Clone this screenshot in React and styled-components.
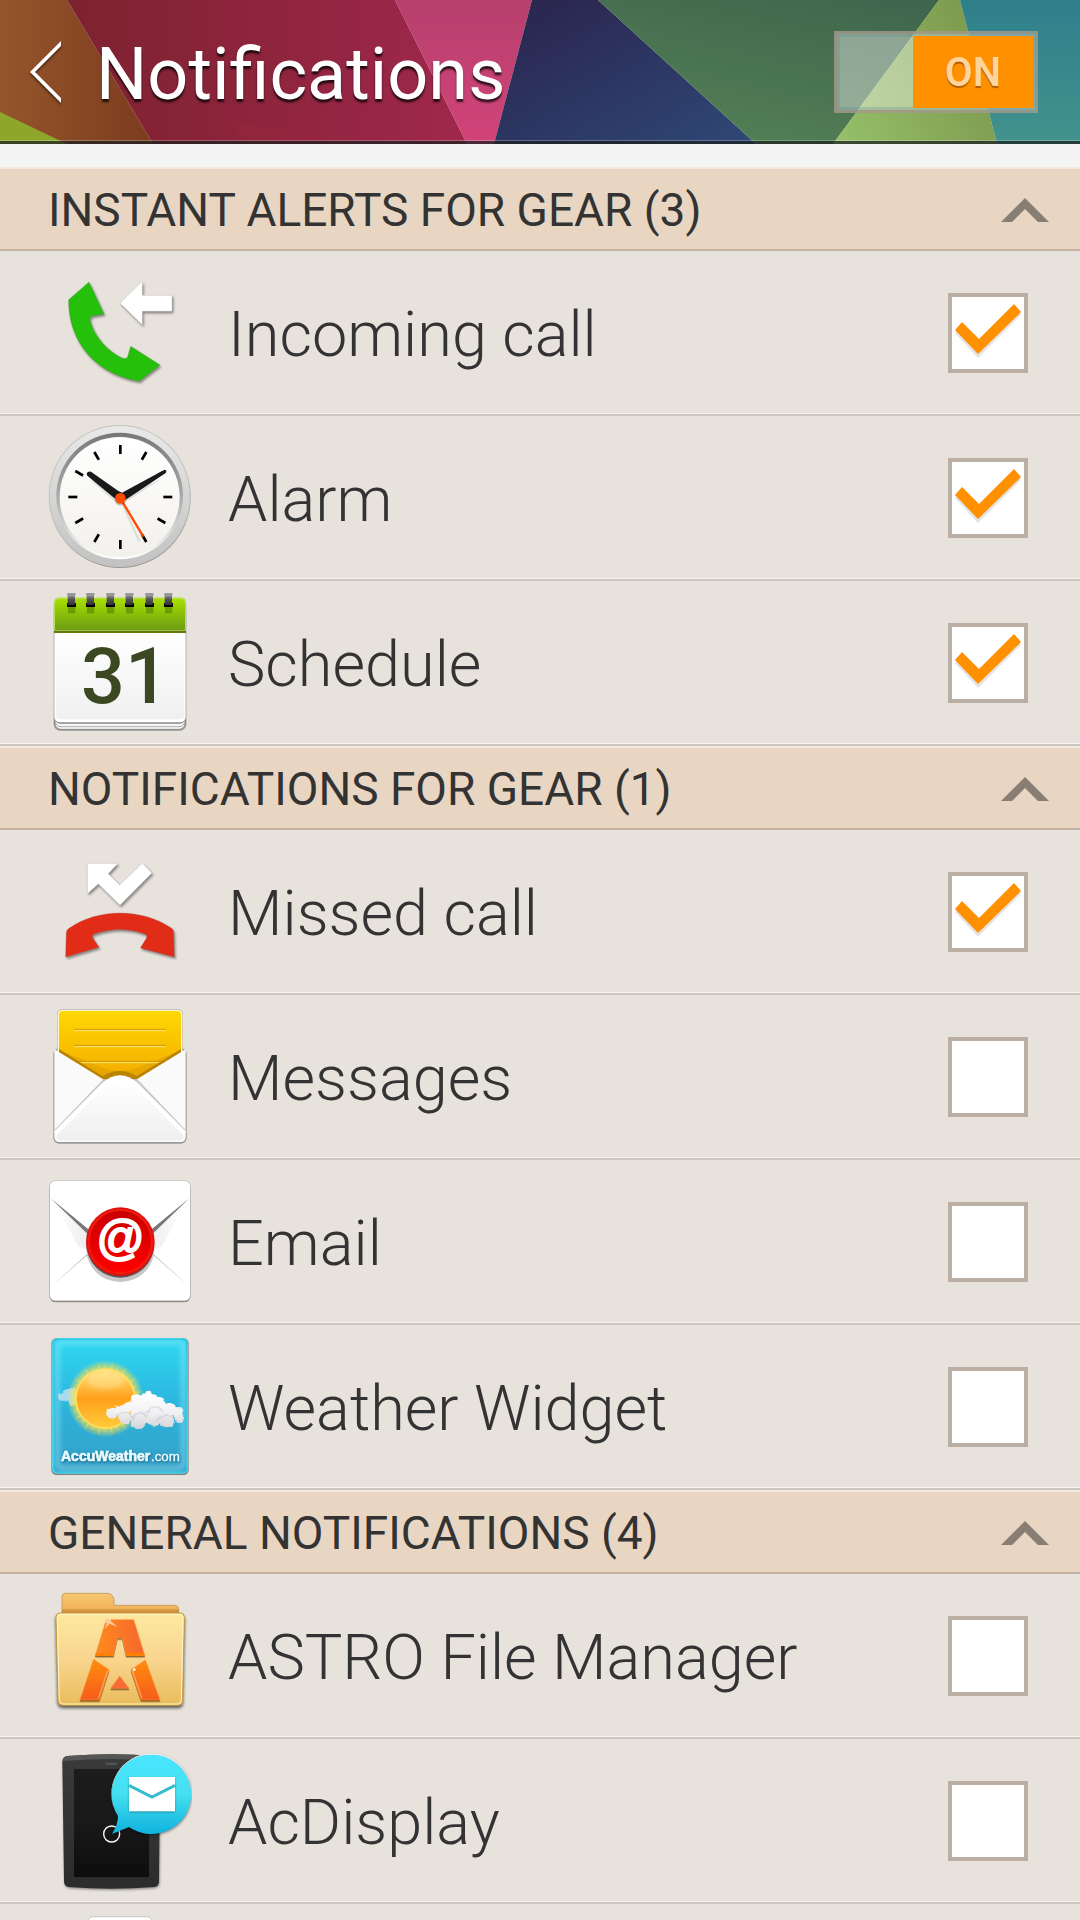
import React, { useState } from 'react'
import styled, { createGlobalStyle } from 'styled-components'

const GlobalStyle = createGlobalStyle`
  * {
    box-sizing: border-box;
  }
  body {
    margin: 0;
    background: #e7e2dc;
    color: #333;
    font-family: Roboto, 'Liberation Sans', sans-serif;
  }
`

const Shade = ({ id, from, mid, to }) => (
  <linearGradient id={id} x1='0' y1='0' x2='0' y2='1'>
    <stop offset='0' stopColor={from} />
    {mid && <stop offset='.5' stopColor={mid} />}
    <stop offset='1' stopColor={to} />
  </linearGradient>
)

const IncomingIcon = () => (
  <Icon viewBox='144 30 432 432' aria-hidden='true'>
    <g filter='drop-shadow(4px 6px 3px rgba(0,0,0,.4))' strokeWidth='1'>
      <path
        fill='#25c009'
        stroke='#5a8a50'
        d='M267 96L206 149C204 250 262 366 417 394L480 345L392 289L383 320Q380 328 369 325C325 306 282 260 270 211Q268 199 280 197L312 192Z'
      />
      <path
        fill='#fff'
        stroke='#aaa'
        d='M360 159L427 94V136H516V184H427V225Z'
      />
    </g>
  </Icon>
)

const AlarmIcon = () => (
  <Icon viewBox='144 525 432 432' aria-hidden='true'>
    <defs>
      <Shade id='rim' from='#e9e9e9' to='#c2c2c2' />
      <Shade id='groove' from='#777' mid='#aaa' to='#fff' />
      <Shade id='face' from='#fff' to='#f3f1ec' />
    </defs>
    <circle cx='360' cy='742' r='212' fill='#999' />
    <circle cx='359' cy='738' r='213' fill='#c6c2bd' />
    <circle cx='359' cy='738' r='210' fill='url(#rim)' />
    <circle cx='359' cy='738' r='190' fill='url(#groove)' />
    <circle cx='359' cy='741' r='180' fill='url(#face)' />
    {[...Array(12)].map((_, i) => (
      <path
        key={i}
        d='M361 585V612'
        stroke='#000'
        strokeWidth='8'
        transform={`rotate(${i * 30} 361 741)`}
      />
    ))}
    <g fill='#000' opacity='.1'>
      <path d='M264 684L352 762L374 758L492 682L370 742Z' />
      <path d='M370 768L418 874' stroke='#000' strokeWidth='6' />
    </g>
    <path
      fill='#191919'
      d='M260 672Q261 662 273 665L354 722L366 728L485 664L500 660L497 669L376 750L350 750L262 677Z'
    />
    <path d='M361 745L430 860' stroke='#ff4b00' strokeWidth='7' />
    <circle cx='361' cy='750' r='17' opacity='.2' />
    <circle cx='361' cy='745' r='16' fill='#ff4b00' />
  </Icon>
)

const ScheduleIcon = () => (
  <Icon viewBox='144 60 432 432' aria-hidden='true'>
    <defs>
      <Shade id='leather' from='#a7de00' to='#6a9c14' />
      <Shade id='paper' from='#fff' to='#f0f0f0' />
      <Shade id='ring' from='#bbb' mid='#555' to='#333' />
    </defs>
    <rect x='161' y='84' width='398' height='398' rx='20' fill='#666' opacity='.6' />
    <rect x='165' y='420' width='390' height='58' rx='18' fill='#f5f5f5' stroke='#777' strokeWidth='2' />
    <rect x='165' y='410' width='390' height='60' rx='18' fill='#f5f5f5' stroke='#888' strokeWidth='2' />
    <rect x='163' y='400' width='394' height='61' rx='18' fill='#888' />
    <rect x='163' y='82' width='394' height='375' rx='16' fill='#fff' />
    <path fill='url(#paper)' d='M168 186H553V435Q553 448 540 448H182Q168 448 168 435Z' />
    <path fill='#b9dc58' d='M162 186V98Q162 82 178 82H542Q558 82 558 98V186Z' />
    <path fill='url(#leather)' d='M165 183V101Q165 87 179 87H541Q555 87 555 101V183Z' />
    <path fill='#a1be55' d='M162 180H558V184H162Z' />
    <path fill='#637a0c' d='M162 183H558V189H162Z' />
    {[214, 271, 331, 388, 448, 505].map((x) => (
      <g key={x}>
        <path fill='#2c5000' opacity='.35' d={`M${x - 10} 108h22v22h-22z`} />
        <path d={`M${x - 13} 99h27v12h-27z`} />
        <rect x={x - 11} y='69' width='22' height='36' rx='3' fill='url(#ring)' />
        <rect x={x - 13} y='69' width='26' height='8' rx='4' fill='#999' />
      </g>
    ))}
    <text
      x='243'
      y='400'
      fontFamily='Roboto, sans-serif'
      fontSize='232'
      fontWeight='500'
      fill='#3c4822'
    >
      31
    </text>
  </Icon>
)

const MissedIcon = () => (
  <Icon viewBox='144 57 432 432' aria-hidden='true'>
    <g filter='drop-shadow(4px 6px 3px rgba(0,0,0,.4))'>
      <path
        fill='#fff'
        stroke='#aaa'
        d='M262 130H354L325 161L359 195L427 130L456 159L360 256L295 192L262 221Z'
      />
      <path
        fill='#e12c17'
        stroke='#a06058'
        d='M197 411L199 336Q200 330 207 325C295 264 425 264 515 325Q521 330 521 336L523 411L421 384L440 353Q443 346 434 342Q360 315 283 342Q275 345 278 353L297 382Z'
      />
    </g>
  </Icon>
)

const MessagesIcon = () => (
  <Icon viewBox='144 552 432 432' aria-hidden='true'>
    <defs>
      <linearGradient id='letter' gradientUnits='userSpaceOnUse' x1='0' y1='573' x2='0' y2='775'>
        <stop offset='0' stopColor='#fdd803' />
        <stop offset='1' stopColor='#f5ac00' />
      </linearGradient>
      <Shade id='envelope' from='#fff' to='#efefef' />
    </defs>
    <rect x='160' y='684' width='400' height='287' rx='18' fill='#777' opacity='.7' />
    <rect x='171' y='568' width='378' height='160' rx='14' fill='#bbb6ae' />
    <rect x='173' y='570' width='374' height='180' rx='13' fill='#fff6cc' />
    <path fill='url(#letter)' d='M177 585Q177 573 189 573H531Q543 573 543 585V790H177Z' />
    <path fill='#bb8600' opacity='.25' d='M177 690L310 744Q360 762 410 744L543 690V700L410 790H310Z' />
    <g strokeWidth='3'>
      <path stroke='#d39b00' d='M222 628H498M222 676H498M230 724H490' />
      <path stroke='#ffe477' d='M222 632H498M222 680H498M236 728H484' />
    </g>
    <path fill='#b98300' d='M177 687L308 769Q358 737 410 769L543 687V700L410 790H310L177 700Z' />
    <path fill='#fafafa' d='M163 688L312 779L360 790L408 779L557 688V940H163Z' />
    <path fill='#c8c8c8' d='M163 930L310 778H412L557 930V940H163Z' />
    <path
      fill='#fff'
      d='M163 934L306 790Q360 742 414 790L557 934V950Q557 966 541 966H179Q163 966 163 950Z'
    />
    <path
      fill='url(#envelope)'
      d='M168 948L318 798Q360 762 402 798L552 948Q550 962 536 962H184Q170 962 168 948Z'
    />
  </Icon>
)

const EmailIcon = () => (
  <Icon viewBox='144 57 432 432' aria-hidden='true'>
    <defs>
      <Shade id='seal' from='#c80000' to='#ff0000' />
      <linearGradient id='foldLeft'>
        <stop offset='0' stopColor='#fff' />
        <stop offset='1' stopColor='#eee' />
      </linearGradient>
      <linearGradient id='foldRight'>
        <stop offset='0' stopColor='#eee' />
        <stop offset='1' stopColor='#fff' />
      </linearGradient>
    </defs>
    <rect x='148' y='94' width='424' height='363' rx='19' fill='#777' opacity='.8' />
    <rect x='148' y='91' width='424' height='362' rx='18' fill='#c9c4be' />
    <rect x='150' y='93' width='420' height='358' rx='16' fill='#fff' />
    <path fill='url(#foldLeft)' d='M160 153L265 245V300L235 290Z' />
    <path fill='url(#foldRight)' d='M560 153L455 245V300L485 290Z' />
    <path fill='#777' d='M152 145L265 238V254ZM568 145L455 238V254Z' />
    <path fill='#bbb' d='M150 411L262 312V316ZM570 411L460 312V316Z' />
    <ellipse cx='361' cy='298' rx='102' ry='98' opacity='.22' />
    <circle cx='361' cy='281' r='102' fill='#555' />
    <circle cx='361' cy='275' r='103' fill='#d11' />
    <circle cx='361' cy='275' r='98' fill='#f11b0b' />
    <circle cx='361' cy='275' r='92' fill='url(#seal)' />
    <text
      x='359'
      y='311'
      textAnchor='middle'
      fontFamily='Liberation Sans, sans-serif'
      fontSize='142'
      fontStyle='italic'
      fill='#fff'
      stroke='#fff'
      strokeWidth='6'
    >
      @
    </text>
  </Icon>
)

const cloudPuffs = [
  [336, 790, 17],
  [360, 782, 18],
  [385, 772, 16],
  [410, 752, 19],
  [447, 748, 23],
  [475, 762, 22],
  [510, 776, 18],
  [535, 790, 16],
  [538, 806, 13],
  [500, 810, 22],
  [460, 806, 24],
  [415, 815, 23],
  [375, 802, 20],
  [430, 785, 34],
  [480, 790, 30],
]

const WeatherIcon = () => (
  <Icon viewBox='144 552 432 432' aria-hidden='true'>
    <defs>
      <Shade id='sky' from='#2fd8f3' mid='#2bb4dc' to='#369fc6' />
      <Shade id='sunBody' from='#ffe07a' mid='#ffa01a' to='#ffcb3c' />
      <linearGradient id='cloud' gradientUnits='userSpaceOnUse' x1='0' y1='730' x2='0' y2='840'>
        <stop offset='0' stopColor='#fff' />
        <stop offset='.5' stopColor='#f2f2f4' />
        <stop offset='1' stopColor='#cfd0d6' />
      </linearGradient>
      <radialGradient id='glow'>
        <stop offset='.65' stopColor='#ffe34f' />
        <stop offset='.82' stopColor='#ffe34f' stopOpacity='.6' />
        <stop offset='1' stopColor='#ffe34f' stopOpacity='0' />
      </radialGradient>
      <filter id='fluff' x='-10%' y='-10%' width='120%' height='120%'>
        <feTurbulence type='fractalNoise' baseFrequency='.06' numOctaves='3' />
        <feDisplacementMap in='SourceGraphic' scale='14' xChannelSelector='R' yChannelSelector='G' />
      </filter>
    </defs>
    <rect x='154' y='564' width='412' height='411' rx='16' fill='#555' opacity='.7' />
    <rect x='156' y='564' width='408' height='407' rx='15' fill='#4fd0ea' />
    <rect x='162' y='568' width='398' height='398' rx='12' fill='url(#sky)' stroke='#1fbfe0' strokeWidth='4' />
    <rect x='172' y='577' width='378' height='379' rx='14' fill='none' stroke='#9beaf8' strokeWidth='14' opacity='.5' filter='blur(8px)' />
    <g filter='url(#fluff)' fill='#a5dcf0'>
      <circle cx='182' cy='742' r='11' />
      <circle cx='198' cy='738' r='15' />
      <circle cx='213' cy='730' r='17' />
      <circle cx='222' cy='750' r='16' />
    </g>
    <circle cx='316' cy='746' r='116' fill='url(#glow)' />
    {[...Array(32)].map((_, i) => (
      <path
        key={i}
        fill='#ffd94b'
        opacity='.6'
        d={`M313 654L316 ${i % 2 ? 634 : 642}L319 654Z`}
        transform={`rotate(${i * 11.25} 316 746)`}
      />
    ))}
    <circle cx='316' cy='746' r='91' fill='#ffdf5e' />
    <circle cx='316' cy='746' r='86' fill='url(#sunBody)' />
    <ellipse cx='316' cy='690' rx='58' ry='26' fill='#fff0b0' opacity='.4' filter='blur(8px)' />
    <g filter='url(#fluff)' fill='url(#cloud)'>
      {cloudPuffs.map(([x, y, r], i) => (
        <circle key={i} cx={x} cy={y} r={r} />
      ))}
      <g fill='none' stroke='#c3c6ce' strokeWidth='5' opacity='.5' filter='blur(2px)'>
        <path d='M350 800Q375 775 395 800M395 810Q415 775 440 800M440 790Q465 755 490 785M470 815Q500 780 525 805' />
      </g>
    </g>
    <g
      fontFamily='Liberation Sans, sans-serif'
      fill='#e9fbff'
      stroke='#e9fbff'
      filter='drop-shadow(2px 3px 3px rgba(0,60,90,.6))'
    >
      <text x='183' y='933' fontSize='42' fontWeight='bold' strokeWidth='2'>
        AccuWeather
      </text>
      <text x='453' y='933' fontSize='40' strokeWidth='1'>
        .com
      </text>
    </g>
  </Icon>
)

const AstroIcon = () => (
  <Icon viewBox='144 309 432 432' aria-hidden='true'>
    <defs>
      <Shade id='tab' from='#f7c873' to='#eda347' />
      <Shade id='folder' from='#fde9a0' mid='#f9d58f' to='#e9bb5b' />
      <linearGradient id='top' x1='0' y1='0' x2='1' y2='0'>
        <stop offset='0' stopColor='#ff8a1c' />
        <stop offset='1' stopColor='#f7662f' />
      </linearGradient>
      <Shade id='leg' from='#ff8d0d' to='#f65c1b' />
    </defs>
    <path
      fill='url(#tab)'
      stroke='#c9a060'
      strokeWidth='3'
      d='M186 420V350Q186 340 196 340H322Q340 342 342 360V376H526Q536 377 536 388V420Z'
    />
    <path fill='#b9772c' opacity='.5' d='M186 388H536V400H186Z' />
    <path
      fill='url(#folder)'
      stroke='#c1993f'
      strokeWidth='3'
      filter='drop-shadow(0 7px 5px rgba(0,0,0,.6))'
      d='M180 399H541Q553 399 553 411L548 664Q548 676 536 676H187Q175 676 174 664L168 411Q168 399 180 399Z'
    />
    <path
      fill='none'
      stroke='#fff4c4'
      strokeWidth='3'
      d='M184 403H538Q549 403 549 413L544 661Q543 672 533 672H190Q179 672 178 661L172 413Q172 403 184 403Z'
    />
    <g stroke='#ff9b3c' strokeWidth='2' filter='drop-shadow(0 4px 2px rgba(80,30,0,.7))'>
      <path fill='url(#top)' d='M319 419H401L434 527H379L367 474H352L340 527H286Z' />
      <path fill='url(#leg)' d='M281 538L327 569L298 660H240Z' />
      <path fill='url(#leg)' d='M436 540L480 660H423L393 569Z' />
      <path fill='#f86a36' d='M359 588L387 625H332Z' />
    </g>
    <path fill='#ff8000' d='M288 519H341V527H286ZM379 519H431L434 527H380Z' />
    <path fill='none' stroke='#ffb169' strokeWidth='3' d='M323 571L295 655M397 570L426 655' />
    <path
      fill='#ffe3c4'
      opacity='.75'
      d='M300 406L323 420L336 407L332 422L352 441L329 431L314 446L321 429L302 426L320 423Z'
    />
    <circle cx='403' cy='569' r='4' fill='#fff' />
  </Icon>
)

const AcDisplayIcon = () => (
  <Icon viewBox='144 114 432 432' aria-hidden='true'>
    <defs>
      <Shade id='case' from='#3a3a3a' to='#2c2c2c' />
      <Shade id='glass' from='#1c1c1c' mid='#191919' to='#0d0d0d' />
      <Shade id='bubble' from='#49e6ff' mid='#45dff0' to='#0fb2de' />
    </defs>
    <path
      fill='url(#case)'
      filter='drop-shadow(2px 4px 3px rgba(0,0,0,.4))'
      d='M187 156Q187 140 203 138Q335 128 465 138Q480 140 480 156L477 516Q476 528 464 531Q335 542 205 531Q193 528 192 516Z'
    />
    <path fill='#555' d='M188 153Q189 140 203 138Q335 128 465 138L478 152Q335 142 188 153Z' />
    <rect x='317' y='158' width='33' height='7' fill='#4b5359' />
    <path fill='url(#glass)' d='M222 177H447V501H222Z' />
    <circle cx='335' cy='372' r='24' fill='none' stroke='#fff' strokeWidth='4' />
    <g filter='drop-shadow(1px 4px 3px rgba(0,0,0,.4))'>
      <path
        fill='#eee'
        d='M455 130A122 122 0 0 0 351 314L353 318A120 120 0 1 1 575 252A120 120 0 0 0 455 130Z'
      />
      <path
        fill='url(#bubble)'
        d='M455 134A119 119 0 1 1 387 351L336 372Q354 344 354 318A119 119 0 0 1 455 134Z'
      />
    </g>
    <rect
      x='387'
      y='201'
      width='138'
      height='103'
      fill='#fff'
      filter='drop-shadow(0 3px 3px rgba(0,80,100,.5))'
    />
    <path fill='none' stroke='#35bccf' strokeWidth='9' d='M387 226L456 261L525 226' />
  </Icon>
)

const BlankIcon = () => (
  <Icon viewBox='144 609 432 432' aria-hidden='true'>
    <rect x='264' y='619' width='192' height='400' rx='14' fill='#c9c4be' />
    <rect x='266' y='622' width='188' height='396' rx='12' fill='#fff' />
  </Icon>
)

const groups = [
  {
    title: 'INSTANT ALERTS FOR GEAR (3)',
    items: [
      { name: 'Incoming call', icon: IncomingIcon, on: true },
      { name: 'Alarm', icon: AlarmIcon, on: true },
      { name: 'Schedule', icon: ScheduleIcon, on: true },
    ],
  },
  {
    title: 'NOTIFICATIONS FOR GEAR (1)',
    items: [
      { name: 'Missed call', icon: MissedIcon, on: true },
      { name: 'Messages', icon: MessagesIcon },
      { name: 'Email', icon: EmailIcon },
      { name: 'Weather Widget', icon: WeatherIcon },
    ],
  },
  {
    title: 'GENERAL NOTIFICATIONS (4)',
    items: [
      { name: 'ASTRO File Manager', icon: AstroIcon },
      { name: 'AcDisplay', icon: AcDisplayIcon },
      { name: '', icon: BlankIcon },
    ],
  },
]

const HeaderArt = () => (
  <Art viewBox='0 0 1080 144' preserveAspectRatio='none' aria-hidden='true'>
    <defs>
      <linearGradient id='orange'>
        <stop offset='0' stopColor='#95552b' />
        <stop offset='1' stopColor='#7c3c1e' />
      </linearGradient>
      <linearGradient id='wine'>
        <stop offset='0' stopColor='#7d2230' />
        <stop offset='.4' stopColor='#8b243a' />
        <stop offset='1' stopColor='#9f284c' />
      </linearGradient>
      <Shade id='pink' from='#b6406d' to='#d24479' />
      <linearGradient id='navy' x2='1' y2='1'>
        <stop offset='0' stopColor='#2a234c' />
        <stop offset='1' stopColor='#2f4877' />
      </linearGradient>
      <linearGradient id='forest' x1='1' y1='0' x2='.5' y2='1'>
        <stop offset='0' stopColor='#3d654d' />
        <stop offset='1' stopColor='#527e54' />
      </linearGradient>
      <linearGradient id='lime' x1='0' y1='1' x2='1' y2='.6'>
        <stop offset='0' stopColor='#96c16b' />
        <stop offset='1' stopColor='#7e9b4e' />
      </linearGradient>
      <Shade id='teal' from='#2e7f8b' to='#42938c' />
    </defs>
    <path fill='url(#orange)' d='M0 0H67L153 144H0Z' />
    <path fill='#8ea62a' d='M0 112L67 144H0Z' />
    <path fill='url(#wine)' d='M67 0H395L467 144H153Z' />
    <path fill='#a0263c' opacity='.25' d='M228 120L340 140H244Z' />
    <path fill='url(#pink)' d='M395 0H532L494 144H467Z' />
    <path fill='url(#navy)' d='M532 0H598L756 144H494Z' />
    <path fill='url(#forest)' d='M598 0H939L833 144H756Z' />
    <path fill='url(#lime)' d='M939 0H960L997 144H833Z' />
    <path fill='url(#teal)' d='M960 0H1080V144H997Z' />
    <path fill='#fff' opacity='.25' d='M0 140H1080V141H0Z' />
    <path fill='#1c2020' opacity='.75' d='M0 141H1080V144H0Z' />
  </Art>
)

const Row = ({ item }) => {
  const [checked, setChecked] = useState(!!item.on)
  const ItemIcon = item.icon
  return (
    <RowLabel>
      <ItemIcon />
      <RowName>{item.name}</RowName>
      <Check>
        <CheckInput
          type='checkbox'
          checked={checked}
          onChange={(e) => setChecked(e.target.checked)}
        />
        {checked && (
          <CheckMark viewBox='0 0 80 80' aria-hidden='true'>
            <path fill='#e4e4e4' d='M7 40L14 32L31 49L66 14L73 22L30 65Z' />
            <path fill='#ff9000' d='M7 37L14 29L31 46L66 11L73 19L30 61Z' />
          </CheckMark>
        )}
      </Check>
    </RowLabel>
  )
}

const Group = ({ group }) => {
  const [open, setOpen] = useState(true)
  return (
    <section>
      <GroupButton aria-expanded={open} onClick={() => setOpen(!open)}>
        <span>{group.title}</span>
        <Arrow viewBox='0 0 48 24' $open={open} aria-hidden='true'>
          <path fill='#887e73' d='M24 0L48 24H37L24 11L11 24H0Z' />
        </Arrow>
      </GroupButton>
      {open && group.items.map((item, i) => <Row key={i} item={item} />)}
    </section>
  )
}

const App = () => {
  const [on, setOn] = useState(true)
  return (
    <Page>
      <GlobalStyle />
      <Header>
        <HeaderArt />
        <BackButton aria-label='Back'>
          <svg width='32' height='64' viewBox='0 0 32 64' aria-hidden='true'>
            <path fill='#fff' d='M31 1V6L5 32L31 58V63L0 32Z' />
          </svg>
        </BackButton>
        <Title>Notifications</Title>
        <Switch
          role='switch'
          aria-checked={on}
          aria-label='Notifications'
          $on={on}
          onClick={() => setOn(!on)}
        >
          <Thumb $on={on}>{on ? 'ON' : 'OFF'}</Thumb>
        </Switch>
      </Header>
      <List>
        {groups.map((group) => (
          <Group key={group.title} group={group} />
        ))}
      </List>
    </Page>
  )
}

const Page = styled.div`
  height: 100vh;
  display: flex;
  flex-direction: column;
  overflow: hidden;
`
const Header = styled.header`
  position: relative;
  flex: none;
  height: 144px;
  display: flex;
  align-items: center;
  padding: 0 42px 0 20px;
`
const Art = styled.svg`
  position: absolute;
  inset: 0;
  width: 100%;
  height: 100%;
`
const BackButton = styled.button`
  position: relative;
  display: flex;
  padding: 10px;
  border: 0;
  background: none;
  filter: drop-shadow(0 2px 1px rgba(0, 0, 0, 0.5));
`
const Title = styled.h1`
  position: relative;
  flex: 1;
  margin: 0;
  padding: 6px 0 0 24px;
  font-size: 72px;
  line-height: 84px;
  font-weight: 400;
  color: #fff;
  text-shadow: 0 3px 2px rgba(0, 0, 0, 0.75);
`
const Switch = styled.button`
  position: relative;
  display: flex;
  justify-content: ${(props) => (props.$on ? 'flex-end' : 'flex-start')};
  width: 204px;
  height: 82px;
  padding: 2px;
  border: 3px solid rgba(150, 135, 120, 0.7);
  background: rgba(255, 255, 255, 0.4);
  box-shadow: inset 0 0 0 3px rgba(100, 140, 140, 0.3);
`
const Thumb = styled.span`
  width: 120px;
  height: 72px;
  background: ${(props) => (props.$on ? '#ff9000' : '#8a8a8a')};
  color: #ffd49c;
  font-family: Roboto, 'Liberation Sans', sans-serif;
  font-size: 40px;
  line-height: 74px;
  font-weight: 600;
  text-align: center;
  text-shadow: 0 2px 1px rgba(120, 60, 0, 0.6);
`
const List = styled.main`
  flex: 1;
  min-height: 0;
  overflow: hidden;
  border-top: 23px solid #f4f4f4;
`
const GroupButton = styled.button`
  width: 100%;
  height: 84px;
  display: flex;
  align-items: center;
  justify-content: space-between;
  padding: 2px 31px 0 48px;
  border: 0;
  border-top: 2px solid #f2e8de;
  border-bottom: 2px solid #c4b3a4;
  background: #e8d6c2;
  color: #333;
  font-family: inherit;
  font-size: 46px;
  text-align: left;
`
const Arrow = styled.svg`
  width: 48px;
  height: 24px;
  transform: ${(props) => (props.$open ? 'none' : 'rotate(180deg)')};
`
const RowLabel = styled.label`
  height: 165px;
  display: flex;
  align-items: center;
  gap: 36px;
  padding: 0 52px 0 48px;
  background: #e7e2dc;
  border-bottom: 2px solid #cdc7c0;
  box-shadow: inset 0 -1px 0 #f7f5f3;
`
const Icon = styled.svg`
  flex: none;
  width: 144px;
  height: 144px;
  margin-bottom: 1px;
`
const RowName = styled.span`
  flex: 1;
  padding-top: 3px;
  font-size: 63px;
  font-weight: 300;
`
const Check = styled.span`
  display: grid;
  width: 80px;
  height: 80px;
`
const CheckInput = styled.input`
  grid-area: 1 / 1;
  appearance: none;
  margin: 0;
  border: 4px solid #bbaea4;
  background: #fff;
`
const CheckMark = styled.svg`
  grid-area: 1 / 1;
  width: 80px;
  height: 80px;
  pointer-events: none;
`

export default App
